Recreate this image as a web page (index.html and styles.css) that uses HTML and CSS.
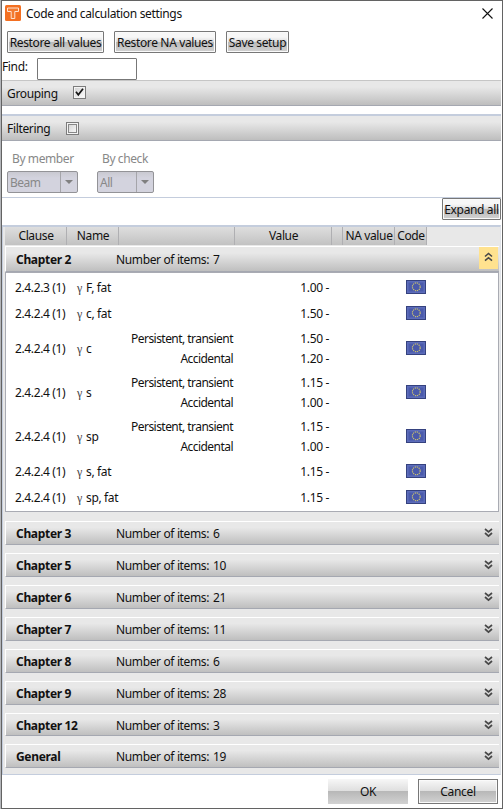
FILE: index.html
```html
<!DOCTYPE html>
<html lang="en">
<head>
<meta charset="utf-8">
<title>Code and calculation settings</title>
<link rel="stylesheet" href="styles.css">
</head>
<body>
<svg class="defs" width="0" height="0" aria-hidden="true">
  <symbol id="flag" viewBox="0 0 20 14">
    <rect width="20" height="14" fill="#35427f"/>
    <rect x="1" y="1" width="18" height="12" fill="#5c6cba"/>
    <rect x="2.5" y="2.5" width="15" height="9" fill="#4a5aab"/>
    <circle cx="10.3" cy="6.8" r="3.9" fill="none" stroke="#c9c06f" stroke-width="1.2" stroke-dasharray="1.25 .79"/>
  </symbol>
  <symbol id="down" viewBox="0 0 9 10">
    <path d="M1 1l3.5 3L8 1M1 5l3.5 3.2L8 5" fill="none" stroke="#484848" stroke-width="1.7"/>
  </symbol>
  <symbol id="up" viewBox="0 0 9 10">
    <path d="M1 4.5l3.5-3L8 4.5M1 8.7l3.5-3L8 8.7" fill="none" stroke="#484848" stroke-width="1.6"/>
  </symbol>
</svg>
<div class="window">
  <header class="title">
    <svg class="logo" width="16" height="16" viewBox="0 0 16 16"><rect width="16" height="16" rx="1.5" fill="#f36f21"/><path d="M2.5 3h11v3.5H9.8V13.5H6.2V6.5H2.5z" fill="#f37a30" stroke="#fde3d2"/></svg>
    <span class="t-title">Code and calculation settings</span>
    <svg class="close" width="11" height="11" viewBox="0 0 11 11"><path d="M.5 .5l10 10M10.5 .5l-10 10" stroke="#111" stroke-width="1.1" fill="none"/></svg>
  </header>
  <div class="toolbar">
    <button class="btn b1">Restore all values</button>
    <button class="btn b2">Restore NA values</button>
    <button class="btn b3">Save setup</button>
  </div>
  <div class="find"><label for="q">Find:</label><input id="q" type="text"></div>
  <div class="band grouping"><span class="lbl">Grouping</span><span class="check"><svg width="9" height="9" viewBox="0 0 9 9"><path d="M1 3.8l2.3 3L8 .8" fill="none" stroke="#151515" stroke-width="1.7"/></svg></span></div>
  <div class="gap"></div>
  <div class="band filtering"><span class="lbl">Filtering</span><span class="check"></span></div>
  <div class="filters">
    <div class="filter member"><span class="fl">By member</span><div class="combo"><span>Beam</span><i><svg width="8" height="4"><path d="M0 0h8L4 4z" fill="#808080"/></svg></i></div></div>
    <div class="filter checkf"><span class="fl">By check</span><div class="combo"><span>All</span><i><svg width="8" height="4"><path d="M0 0h8L4 4z" fill="#808080"/></svg></i></div></div>
  </div>
  <div class="expand"><button class="btn">Expand all</button></div>
  <main class="panel">
    <div class="cols head"><span>Clause</span><span>Name</span><span></span><span>Value</span><span></span><span>NA value</span><span>Code</span></div>
    <div class="bar open"><b>Chapter 2</b><span>Number of items:</span><em>7</em><i><svg width="9" height="10"><use href="#up"/></svg></i></div>
    <div class="items">
      <div class="cols row"><span>2.4.2.3 (1)</span><span><u>γ</u>F, fat</span><span></span><span class="v">1.00 -</span><svg width="20" height="14"><use href="#flag"/></svg></div>
      <div class="cols row"><span>2.4.2.4 (1)</span><span><u>γ</u>c, fat</span><span></span><span class="v">1.50 -</span><svg width="20" height="14"><use href="#flag"/></svg></div>
      <div class="cols row two"><span>2.4.2.4 (1)</span><span><u>γ</u>c</span><span class="d">Persistent, transient<br>Accidental</span><span class="v">1.50 -<br>1.20 -</span><svg width="20" height="14"><use href="#flag"/></svg></div>
      <div class="cols row two"><span>2.4.2.4 (1)</span><span><u>γ</u>s</span><span class="d">Persistent, transient<br>Accidental</span><span class="v">1.15 -<br>1.00 -</span><svg width="20" height="14"><use href="#flag"/></svg></div>
      <div class="cols row two"><span>2.4.2.4 (1)</span><span><u>γ</u>sp</span><span class="d">Persistent, transient<br>Accidental</span><span class="v">1.15 -<br>1.00 -</span><svg width="20" height="14"><use href="#flag"/></svg></div>
      <div class="cols row"><span>2.4.2.4 (1)</span><span><u>γ</u>s, fat</span><span></span><span class="v">1.15 -</span><svg width="20" height="14"><use href="#flag"/></svg></div>
      <div class="cols row"><span>2.4.2.4 (1)</span><span><u>γ</u>sp, fat</span><span></span><span class="v">1.15 -</span><svg width="20" height="14"><use href="#flag"/></svg></div>
    </div>
    <div class="chapters">
      <div class="bar"><b>Chapter 3</b><span>Number of items:</span><em>6</em><i><svg width="9" height="10"><use href="#down"/></svg></i></div>
      <div class="bar"><b>Chapter 5</b><span>Number of items:</span><em>10</em><i><svg width="9" height="10"><use href="#down"/></svg></i></div>
      <div class="bar"><b>Chapter 6</b><span>Number of items:</span><em>21</em><i><svg width="9" height="10"><use href="#down"/></svg></i></div>
      <div class="bar"><b>Chapter 7</b><span>Number of items:</span><em>11</em><i><svg width="9" height="10"><use href="#down"/></svg></i></div>
      <div class="bar"><b>Chapter 8</b><span>Number of items:</span><em>6</em><i><svg width="9" height="10"><use href="#down"/></svg></i></div>
      <div class="bar"><b>Chapter 9</b><span>Number of items:</span><em>28</em><i><svg width="9" height="10"><use href="#down"/></svg></i></div>
      <div class="bar short"><b>Chapter 12</b><span>Number of items:</span><em>3</em><i><svg width="9" height="10"><use href="#down"/></svg></i></div>
      <div class="bar"><b>General</b><span>Number of items:</span><em>19</em><i><svg width="9" height="10"><use href="#down"/></svg></i></div>
    </div>
  </main>
  <footer class="actions"><button class="act ok">OK</button><button class="act cancel">Cancel</button></footer>
</div>
</body>
</html>
```

FILE: styles.css
```css
* { box-sizing: border-box; }
body {
  margin: 0; width: 503px; height: 809px; overflow: hidden;
  padding-left: 1px; background: #b4b6ba;
  font: 12px/16px "Noto Sans", "Open Sans", sans-serif;
  letter-spacing: -0.36px; color: #111; white-space: nowrap;
}
.defs { display: block; height: 0; }
button, input { font: inherit; letter-spacing: inherit; color: inherit; margin: 0; }
.window {
  width: 502px; height: 809px; background: #fff; padding-right: 1px;
  border: 1px solid #636363; display: flex; flex-direction: column;
}
.title { height: 30px; flex: none; display: flex; align-items: center; padding: 0 8px 6px 3px; }
.t-title { margin-left: 5px; padding-top: 1px; letter-spacing: -0.33px; }
.close { margin-left: auto; }
.toolbar { height: 27px; flex: none; display: flex; padding-left: 5px; }
.btn {
  height: 22px; padding: 2px 0 0; text-align: center; border: 1px solid #777; border-radius: 1px;
  background: linear-gradient(#f7f7f7 0 25%, #dedede 48%, #b9b9b9 50%, #d2d2d2);
  box-shadow: inset 0 0 0 1px #fafafa;
}
.b1 { width: 97px; }
.b2 { width: 102px; margin-left: 10px; }
.b3 { width: 63px; margin-left: 10px; }
.find { height: 22px; flex: none; display: flex; }
.find label { width: 35px; padding-top: 1px; }
.find input { width: 100px; height: 22px; border: 1px solid #777; border-radius: 1px; padding: 0 3px; background: #fff; }
.band {
  flex: none; display: flex; align-items: center; padding-left: 5px;
  background: linear-gradient(#e8e8e8 25%, #bebebe);
  border-bottom: 1px solid #a5a8b1;
}
.grouping { height: 26px; border-top: 1px solid #c6c6c6; }
.filtering { height: 25px; }
.grouping .lbl { width: 66px; }
.filtering .lbl { width: 59px; }
.lbl { padding-top: 2px; letter-spacing: -.34px; }
.check {
  width: 13px; height: 13px; border: 1px solid #7c7c7c; display: flex; align-items: center; justify-content: center;
  background: linear-gradient(135deg, #cfcfcf, #fff); box-shadow: inset 0 0 0 1px #f4f4f4;
}
.grouping .check { margin-bottom: 1px; }
.filtering .check { box-shadow: inset 0 0 0 1px #f4f4f4, inset 0 0 0 2px #888; }
.gap { height: 10px; flex: none; border-bottom: 2px solid #c4cddd; }
.filters {
  height: 57px; flex: none; display: flex; color: #888; padding: 10px 0 0 5px;
  border-bottom: 1px solid #c4cddd;
}
.filter { display: flex; flex-direction: column; gap: 4px; letter-spacing: -.48px; }
.member { width: 90px; }
.fl { padding-left: 5px; letter-spacing: -.4px; }
.combo {
  height: 22px; border: 1px solid #939397; border-radius: 2px; display: flex;
  background: linear-gradient(#c9c9d1, #d3d3de 30%); letter-spacing: -.5px;
}
.member .combo { width: 71px; }
.checkf .combo { width: 57px; }
.combo span { flex: 1; padding: 3px 0 0 2px; }
.combo i { width: 17px; border-left: 1px solid #a5a5aa; display: flex; align-items: center; justify-content: center; }
.expand { height: 27px; flex: none; display: flex; justify-content: flex-end; }
.expand .btn { width: 59px; }
.panel {
  height: 550px; flex: none; background: #e8e8e8; padding-left: 2px;
  border: 1px solid #c4cddd; border-top-width: 2px; border-right-color: #e0e3e8;
}
.cols { display: grid; grid-template-columns: 62px 52px 116px 97px 11px 52px 32px; }
.head { height: 18px; width: 422px; background: linear-gradient(#dedede, #c2c2c2); text-align: center; }
.head span { border-right: 1px solid #afafb2; padding: 1px 0 0 1px; }
.bar {
  width: 494px; height: 24px; display: grid; grid-template-columns: 100px 97px 1fr 19px;
  align-items: center; padding: 0 1px 0 10px; border: solid #fff; border-width: 1px 0 1px 1px;
  border-bottom-color: #a5a8b1; background: linear-gradient(#e8e8e8 25%, #bfbfbf);
}
.bar b { letter-spacing: -.32px; }
.bar em { font-style: normal; }
.bar b, .bar span, .bar em { padding-top: 2px; }
.bar i { height: 22px; display: flex; justify-content: center; align-items: center; padding-bottom: 1px; }
.open { margin-top: 1px; height: 26px; }
.open i { background: #ffe28f; align-self: start; padding-bottom: 2px; }
.items { width: 494px; height: 240px; background: #fff; border: 1px solid #a9abb3; padding-top: 1px; }
.row { height: 26px; align-items: center; padding-left: 9px; grid-template-columns: 62px 50px 106px 96px 77px 20px; }
.row > span { padding-top: 1px; }
.row.two { height: 44px; line-height: 20px; }
.row svg { grid-column: 6; }
.row u { text-decoration: none; font-family: "Liberation Serif", serif; margin-right: 3px; color: #444; display: inline-block; width: 6px; }
.d, .v { text-align: right; }
.d { letter-spacing: -.54px; }
.chapters { padding-top: 9px; display: flex; flex-direction: column; gap: 8px; }
.chapters .short { height: 23px; }
.actions { flex: 1; display: flex; justify-content: flex-end; gap: 10px; padding: 4px 3px 0 0; }
.act {
  width: 80px; height: 25px; padding: 1px 0 0; border: 0; letter-spacing: -.3px;
  background: linear-gradient(#f7f7f7, #dedede 49%, #b8b8b8 50%, #d2d2d2);
}
.cancel { border: 1px solid #777; box-shadow: inset 0 0 0 1px #fafafa; }
```
